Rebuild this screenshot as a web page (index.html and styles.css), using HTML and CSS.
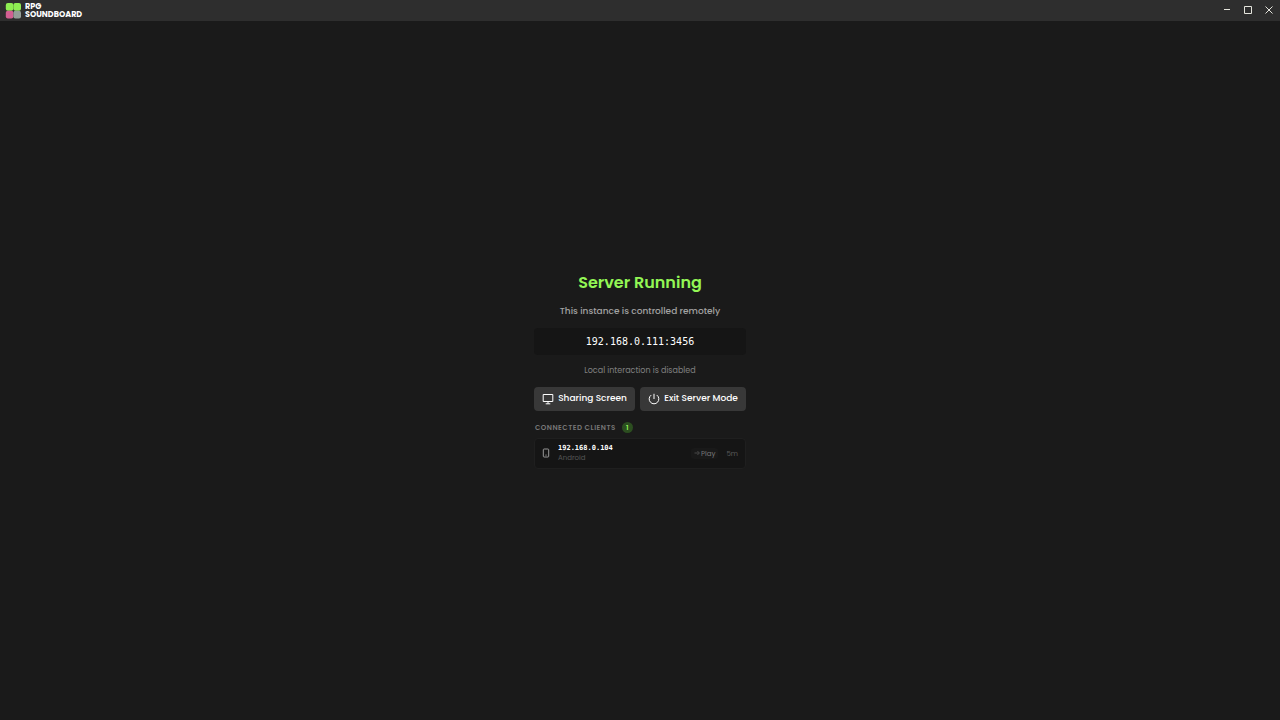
FILE: index.html
```html
<!DOCTYPE html>
<html lang="en">
<head>
<meta charset="utf-8">
<title>RPG Soundboard</title>
<link rel="stylesheet" href="styles.css">
</head>
<body>
<header class="titlebar">
  <div class="brand">
    <svg class="logo" viewBox="0 0 16 16" aria-hidden="true">
      <rect x="0.8" y="0" width="7.6" height="7.8" rx="2" fill="#8eed52"/>
      <rect x="8.4" y="0" width="7.6" height="7.8" rx="2" fill="#8eed52"/>
      <rect x="0.8" y="7.8" width="7.6" height="7.8" rx="2" fill="#d25f92"/>
      <rect x="8.4" y="7.8" width="7.6" height="7.8" rx="2" fill="#949e98"/>
    </svg>
    <span class="brand-name">RPG<br>SOUNDBOARD</span>
  </div>
  <div class="window-controls">
    <button class="window-button" aria-label="Minimize"><svg viewBox="0 0 10 10"><path d="M2 4.5H8"/></svg></button>
    <button class="window-button" aria-label="Maximize"><svg viewBox="0 0 10 10"><path d="M1.5 1.5H8.5V8.5H1.5Z"/></svg></button>
    <button class="window-button" aria-label="Close"><svg viewBox="0 0 10 10"><path d="M1.5 1.5L8.5 8.5M8.5 1.5L1.5 8.5"/></svg></button>
  </div>
</header>
<main class="stage">
  <section class="panel">
    <h1 class="title">Server Running</h1>
    <p class="subtitle">This instance is controlled remotely</p>
    <div class="address">192.168.0.111:3456</div>
    <p class="note">Local interaction is disabled</p>
    <div class="actions">
      <button class="action"><svg class="action-icon" viewBox="0 0 12 12" aria-hidden="true"><path d="M1.2 1.5H10.8V8.5H1.2ZM6 8.5V10.7M3.7 10.8H8.3"/></svg>Sharing Screen</button>
      <button class="action"><svg class="action-icon" viewBox="0 0 12 12" aria-hidden="true"><path d="M6 .8V6M3.2 2.1A4.8 4.8 0 1 0 8.8 2.1"/></svg>Exit Server Mode</button>
    </div>
    <h2 class="clients-title">CONNECTED CLIENTS <span class="count">1</span></h2>
    <ul class="clients">
      <li class="client">
        <svg class="device" viewBox="0 0 8 10" aria-hidden="true"><rect x="1.3" y="1" width="5.4" height="8" rx=".8"/><path d="M3.4 7.1H4.6"/></svg>
        <div class="client-info">
          <span class="client-ip">192.168.0.104</span>
          <span class="client-os">Android</span>
        </div>
        <span class="event"><svg class="arrow" viewBox="0 0 6 6" aria-hidden="true"><path d="M.5 3H5.3M3.4 1L5.4 3L3.4 5"/></svg>Play</span>
        <span class="time">5m</span>
      </li>
    </ul>
  </section>
</main>
</body>
</html>
```
FILE: styles.css
```css
* {
  box-sizing: border-box;
}

body {
  margin: 0;
  min-height: 100vh;
  display: flex;
  flex-direction: column;
  background: #1a1a1a;
  color: #fff;
  font-family: Poppins, Inter, sans-serif;
}

h1, h2, p, ul {
  margin: 0;
  padding: 0;
}

button {
  border: 0;
  font-family: inherit;
  color: inherit;
}

svg {
  fill: none;
  stroke: currentColor;
  flex: none;
}

.titlebar {
  display: flex;
  justify-content: space-between;
  height: 21px;
  background: #2e2e2e;
}

.brand {
  display: flex;
  align-items: center;
  gap: 4px;
  padding-left: 5px;
}

.logo {
  width: 16px;
  height: 16px;
  stroke: none;
}

.brand-name {
  font-size: 8px;
  line-height: 8px;
  font-weight: 700;
}

.window-controls {
  display: flex;
  padding-right: 1px;
}

.window-button {
  display: grid;
  place-items: center;
  width: 21px;
  padding: 0 0 1px;
  background: transparent;
  color: #e4e4dc;
}

.window-button svg {
  width: 10px;
  height: 10px;
}

.stage {
  flex: 1;
  display: grid;
  place-items: center;
  padding-bottom: 2px;
}

.panel {
  display: flex;
  flex-direction: column;
  width: 212px;
  text-align: center;
}

.title {
  font-size: 16px;
  line-height: 24px;
  font-weight: 600;
  color: #93f655;
}

.subtitle {
  margin-top: 8px;
  font-size: 9px;
  line-height: 16px;
  font-weight: 500;
  color: #a2a2a2;
}

.address {
  margin-top: 9px;
  border-radius: 4px;
  background: #151515;
  font: 10px/27px "DejaVu Sans Mono", monospace;
}

.note {
  margin-top: 9px;
  font-size: 8px;
  line-height: 14px;
  color: #808080;
}

.actions {
  display: flex;
  gap: 5px;
  margin-top: 9px;
}

.action {
  display: flex;
  flex: 1 0 auto;
  align-items: center;
  justify-content: center;
  gap: 4px;
  height: 24px;
  padding: 0 7px;
  border-radius: 4px;
  background: #383838;
  font-size: 9px;
  font-weight: 500;
  white-space: nowrap;
}

.action-icon {
  width: 12px;
  height: 12px;
}

.clients-title {
  display: flex;
  align-items: center;
  gap: 6px;
  margin-top: 11px;
  padding-left: 1px;
  font-size: 7px;
  line-height: 11px;
  font-weight: 600;
  letter-spacing: 0.07em;
  color: #777;
}

.count {
  width: 11px;
  border-radius: 50%;
  background: #2c4e20;
  color: #8eed52;
  letter-spacing: 0;
  text-align: center;
}

.clients {
  margin-top: 5px;
  list-style: none;
}

.client {
  display: flex;
  align-items: center;
  height: 31px;
  padding: 0 7px;
  border: 1px solid #1f1f1f;
  border-radius: 4px;
  background: #151515;
}

.device {
  width: 8px;
  height: 10px;
  color: #999;
}

.client-info {
  display: flex;
  flex: 1;
  flex-direction: column;
  padding-left: 8px;
  text-align: left;
  line-height: 10px;
}

.client-ip {
  font-family: "DejaVu Sans Mono", monospace;
  font-size: 7px;
  font-weight: 700;
}

.client-os {
  font-size: 7px;
  color: #555;
}

.event {
  display: flex;
  align-items: center;
  gap: 1px;
  padding: 0 3px;
  border-radius: 3px;
  background: #191919;
  font-size: 7px;
  line-height: 11px;
  color: #777;
}

.arrow {
  width: 6px;
  height: 6px;
  color: #484848;
}

.time {
  margin-left: 8px;
  font-size: 7px;
  line-height: 11px;
  color: #5a5a5a;
}
```
